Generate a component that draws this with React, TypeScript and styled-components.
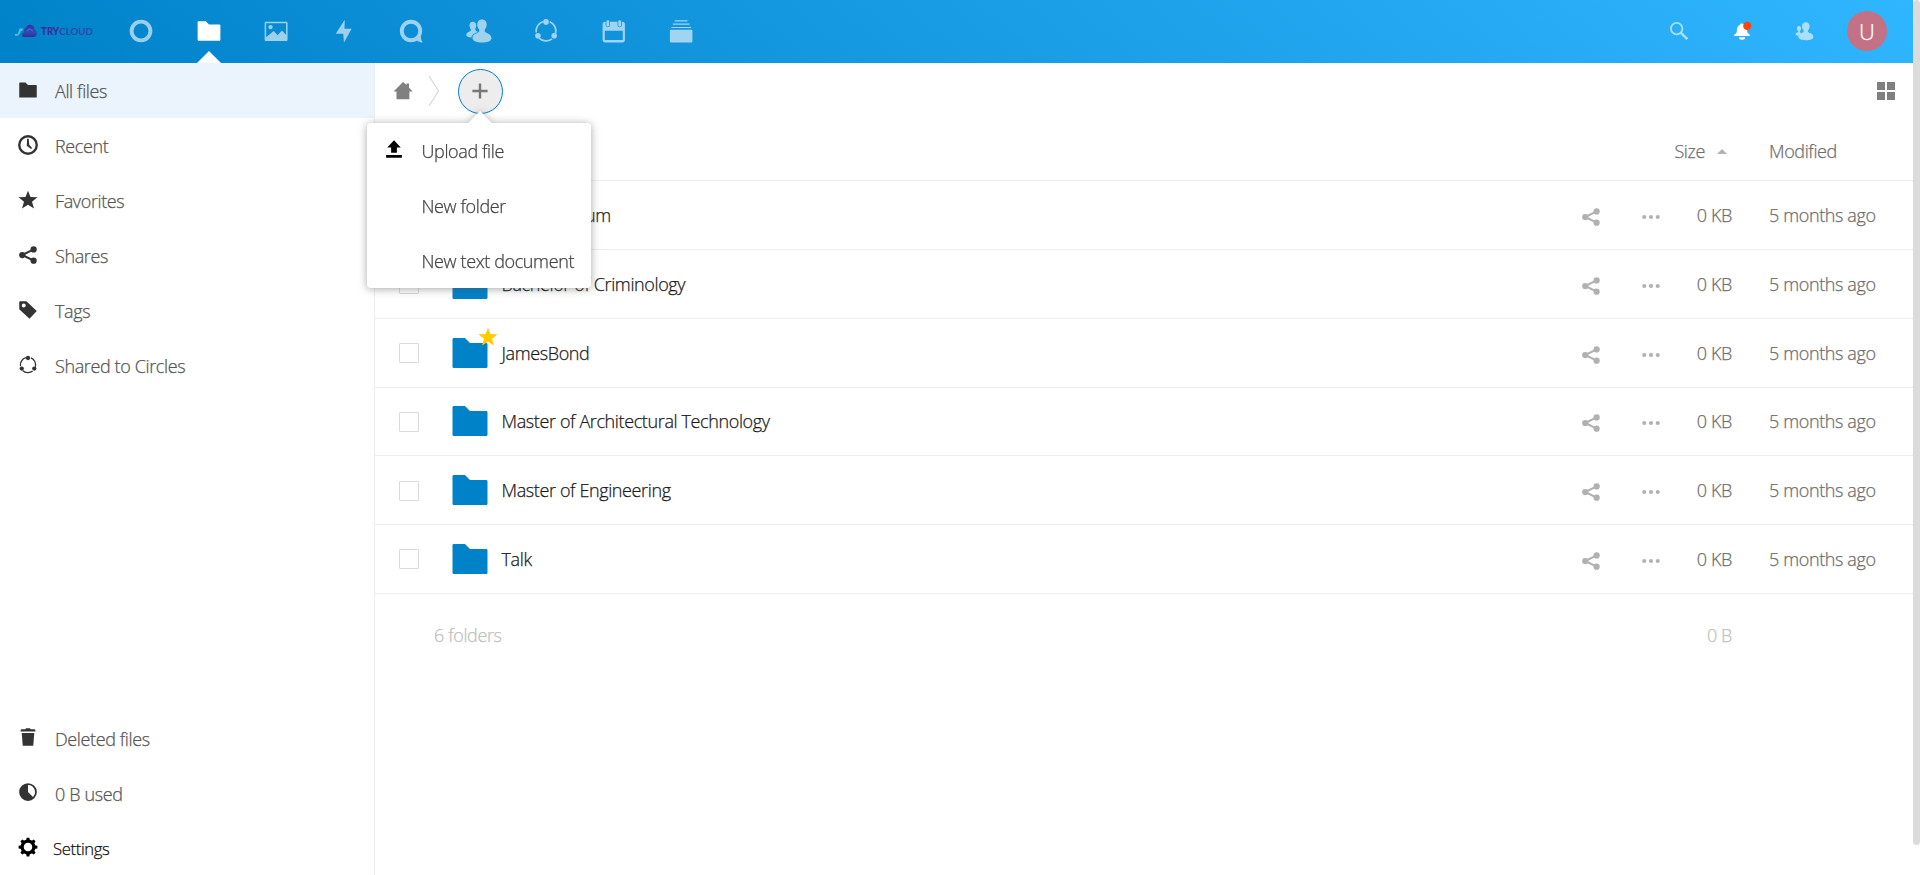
import React from "react";
import styled, { createGlobalStyle, css } from "styled-components";

const GlobalStyle = createGlobalStyle`
  *, *::before, *::after { box-sizing: border-box; }
  html, body { margin: 0; padding: 0; }
  body {
    background: #fff;
    color: #222;
    font-family: "Open Sans", "Noto Sans", sans-serif;
    font-size: 18px;
    font-weight: 300;
    letter-spacing: -0.38px;
    -webkit-text-stroke-width: 0.25px;
    overflow: hidden;
  }
  svg { display: block; flex: none; }
`;

/* ---------- layout ---------- */

const Page = styled.div`
  display: flex;
  height: 875px;
`;

const Shell = styled.div`
  flex: 1;
  min-width: 0;
  display: flex;
  flex-direction: column;
`;

const ScrollTrack = styled.div`
  width: 7px;
`;

const ScrollThumb = styled.div`
  height: 845px;
  border-radius: 4px;
  background: #dbdbdb;
`;

const Header = styled.header`
  height: 62.5px;
  flex: none;
  display: flex;
  align-items: stretch;
  padding-right: 15px;
  background: linear-gradient(40deg, #0082c9 0%, #30b6ff 100%);
`;

const LogoBox = styled.div`
  width: 107.7px;
  padding: 22px 0 0 14px;
`;

const AppNav = styled.nav`
  flex: 1;
  display: flex;
`;

const AppLink = styled.a<{ $active?: boolean }>`
  width: 67.5px;
  display: flex;
  align-items: center;
  justify-content: center;
  color: #fff;
  position: relative;
  svg { opacity: ${(p) => (p.$active ? 1 : 0.6)}; }
  ${(p) =>
    p.$active &&
    css`
      &::after {
        content: "";
        position: absolute;
        bottom: 0;
        left: 50%;
        margin-left: -12px;
        border: 12px solid transparent;
        border-top-width: 0;
        border-bottom-color: #fff;
      }
    `}
`;

const HeaderTools = styled.div`
  display: flex;
`;

const Tool = styled.a<{ $dim?: boolean }>`
  width: 62.5px;
  display: flex;
  align-items: center;
  justify-content: center;
  color: #fff;
  svg { opacity: ${(p) => (p.$dim ? 0.6 : 1)}; }
`;

const Avatar = styled.div`
  width: 40px;
  height: 40px;
  border-radius: 50%;
  background: #c37285;
  color: #fff;
  font-size: 22px;
  line-height: 40px;
  text-align: center;
`;

const Body = styled.div`
  flex: 1;
  display: flex;
  min-height: 0;
`;

const Sidebar = styled.aside`
  width: 375px;
  flex: none;
  border-right: 1px solid #ededed;
  display: flex;
  flex-direction: column;
  justify-content: space-between;
`;

const NavList = styled.ul`
  list-style: none;
  margin: 0;
  padding: 0;
`;

const NavItem = styled.li<{ $active?: boolean; $strong?: boolean }>`
  height: 55px;
  display: flex;
  align-items: center;
  padding: 2px 0 0 18px;
  gap: ${(p) => (p.$strong ? 15 : 17)}px;
  color: ${(p) => (p.$strong ? "#111" : "#555")};
  font-size: ${(p) => (p.$strong ? 16.7 : 18)}px;
  background: ${(p) => (p.$active ? "#ebf3fc" : "transparent")};
  svg {
    color: ${(p) => (p.$strong ? "#000" : "#333")};
    margin-top: -3px;
  }
`;

const Main = styled.main`
  flex: 1;
  min-width: 0;
`;

const Controls = styled.div`
  height: 62.5px;
  display: flex;
  align-items: center;
  justify-content: space-between;
  padding: 0 18px 5px 18px;
  color: #808080;
`;

const Crumbs = styled.div`
  display: flex;
  align-items: center;
`;

const CrumbSeparator = styled.svg`
  margin: 0 18px 0 14.5px;
`;

const NewButtonWrap = styled.div`
  position: relative;
`;

const NewButton = styled.button`
  width: 45px;
  height: 45px;
  padding: 0;
  display: flex;
  align-items: center;
  justify-content: center;
  border: 1px solid #0082c9;
  border-radius: 50%;
  background: #ededed;
  color: #777;
`;

const Menu = styled.ul`
  position: absolute;
  z-index: 2;
  top: 54px;
  left: -91px;
  width: 224px;
  margin: 0;
  padding: 0;
  list-style: none;
  background: #fff;
  border-radius: 4px;
  filter: drop-shadow(0 1px 4px rgba(77, 77, 77, 0.5));
  &::after {
    content: "";
    position: absolute;
    bottom: 100%;
    left: 101px;
    border: 12px solid transparent;
    border-top-width: 0;
    border-bottom-color: #fff;
  }
`;

const MenuItem = styled.li`
  height: 55px;
  display: flex;
  align-items: center;
  gap: 18px;
  padding: 2px 0 0 17px;
  color: #444;
  white-space: nowrap;
`;

const MenuIcon = styled.span`
  width: 20px;
  color: #000;
  padding-bottom: 4px;
`;

const rowGrid = css`
  display: grid;
  grid-template-columns: 74.5px 52px 1fr 60px 60px 51px 181px;
  align-items: center;
`;

const TableHead = styled.div`
  ${rowGrid}
  height: 56.25px;
  padding-bottom: 3px;
  border-bottom: 1px solid #ededed;
  color: #6e6e6e;
`;

const Row = styled.div`
  ${rowGrid}
  height: 68.75px;
  border-bottom: 1px solid #ededed;
`;

const Summary = styled.div`
  ${rowGrid}
  height: 82px;
  color: #c0c0c0;
`;

const Checkbox = styled.span`
  width: 20px;
  height: 20px;
  margin-left: 24px;
  margin-top: 1px;
  border: 1px solid #dbdbdb;
  border-radius: 1px;
`;

const Thumb = styled.span`
  position: relative;
  color: #0082c9;
`;

const StarBadge = styled.span`
  position: absolute;
  top: -5.5px;
  left: 28.5px;
  color: #fc0;
`;

const Name = styled.span`
  white-space: nowrap;
  color: #1a1a1a;
`;

const Action = styled.span`
  display: flex;
  justify-content: center;
  padding-top: 4px;
  color: #b1b1b1;
`;

const Size = styled.span`
  text-align: right;
  white-space: nowrap;
`;

const SizeHead = styled.span`
  grid-column: 5 / 7;
  display: flex;
  align-items: center;
  justify-content: flex-end;
  gap: 12px;
  padding-right: 5px;
`;

const Modified = styled.span`
  padding-left: 37px;
  white-space: nowrap;
`;

const RowSize = styled(Size)`
  color: #6e6e6e;
`;

const RowModified = styled(Modified)`
  color: #6e6e6e;
`;

const Count = styled.span`
  grid-column: 1 / 4;
  padding-left: 59px;
`;

const TotalSize = styled(Size)`
  grid-column: 6;
`;

/* ---------- icons ---------- */

type IconProps = { size?: number };

const Icon = ({ size = 20, box = 16, children }: IconProps & { box?: number; children: React.ReactNode }) => (
  <svg width={size} height={size} viewBox={`0 0 ${box} ${box}`} fill="currentColor">
    {children}
  </svg>
);

const FolderIcon = ({ size }: IconProps) => (
  <Icon size={size}>
    <path d="M1.5 2c-.25 0-.5.25-.5.5v11c0 .26.24.5.5.5h13c.26 0 .5-.24.5-.5v-9c0-.25-.25-.5-.5-.5H8L6 2z" />
  </Icon>
);

const ShareIcon = () => (
  <Icon>
    <circle cx="3.4" cy="8" r="2.5" />
    <circle cx="12.5" cy="3.5" r="2.5" />
    <circle cx="12.5" cy="12.5" r="2.5" />
    <path d="M12.5 3.5 3.4 8l9.1 4.5" fill="none" stroke="currentColor" strokeWidth="1.7" />
  </Icon>
);

const StarIcon = () => (
  <Icon>
    <path d="m8 .5 2 5 5.600.3-4.400 3.500 1.600 5.500L8 11.700l-4.800 3.100 1.600-5.500L.4 5.800 6 5.500z" />
  </Icon>
);

const ClockIcon = () => (
  <Icon>
    <circle cx="8" cy="8" r="7" fill="none" stroke="currentColor" strokeWidth="1.9" />
    <path d="M7.3 3h1.3l.4 4.7 2.3 2.6-.9.9L7 8.6z" />
  </Icon>
);

const TagIcon = () => (
  <Icon>
    <path
      fillRule="evenodd"
      d="M1.5 1h5.2L15 8.8 9.2 15 1 7.3V1.5zM4.6 2.8a1.6 1.6 0 1 0 0 3.2 1.6 1.6 0 0 0 0-3.2z"
    />
  </Icon>
);

const TrashIcon = () => (
  <Icon>
    <path d="M6.4 1h3.2l.5.8H13c.6 0 .9.4 1 1.7H2c.1-1.3.4-1.7 1-1.7h2.900zM3 4.800h10L12.200 15H3.800z" />
  </Icon>
);

const QuotaIcon = () => (
  <Icon>
    <path fillRule="evenodd" d="M8 .9a7.100 7.100 0 1 0 0 14.200A7.100 7.100 0 0 0 8 .9zm0 1.500a5.600 5.600 0 0 1 4 9.500L8 8z" />
  </Icon>
);

const GearIcon = () => (
  <Icon>
    <circle cx="8" cy="8" r="4.700" fill="none" stroke="currentColor" strokeWidth="2.600" />
    {[0, 45, 90, 135].map((a) => (
      <path key={a} transform={`rotate(${a} 8 8)`} d="M6.500 3 6.900.5h2.200l.4 2.500zM6.500 13l.4 2.500h2.200l.4-2.500z" />
    ))}
  </Icon>
);

const arc = (from: number, to: number, c: number, r: number) => {
  const p = (a: number) =>
    `${(c + r * Math.cos((a * Math.PI) / 180)).toFixed(2)} ${(c + r * Math.sin((a * Math.PI) / 180)).toFixed(2)}`;
  return `M${p(from)}A${r} ${r} 0 0 1 ${p(to)}`;
};

const CirclesIcon = ({ size }: IconProps) => (
  <Icon size={size} box={26}>
    <g fill="none" stroke="currentColor" strokeWidth="1.7">
      {[-90, 30, 150].map((a) => (
        <path key={a} d={arc(a + 22, a + 104, 13, 9.9)} />
      ))}
    </g>
    <circle cx="13" cy="3.900" r="2.800" />
    <circle cx="4.900" cy="17.700" r="2.800" />
    <circle cx="21.200" cy="17.700" r="2.800" />
  </Icon>
);

const HomeIcon = () => (
  <Icon>
    <path d="M8 .8 .4 8.300h2.400v6.300h10.300V8.300h2.600l-2.900-2.900V1.900h-2v1.300z" />
  </Icon>
);

const GridIcon = () => (
  <Icon size={18} box={18}>
    <path d="M0 0h8v8H0zM10 0h8v8h-8zM0 10h8v8H0zM10 10h8v8h-8z" />
  </Icon>
);

const UploadIcon = () => (
  <Icon>
    <path d="M8 1 2.600 6.800h3.100v4.200h4.600V6.800h3.100zM1.700 12.800h12.600V15H1.700z" />
  </Icon>
);

const DotsIcon = () => (
  <Icon>
    <circle cx="2.600" cy="8" r="1.650" />
    <circle cx="8" cy="8" r="1.650" />
    <circle cx="13.400" cy="8" r="1.650" />
  </Icon>
);

const RingIcon = () => (
  <Icon size={26} box={26}>
    <circle cx="13" cy="13" r="9.400" fill="none" stroke="currentColor" strokeWidth="3.900" />
  </Icon>
);

const PictureIcon = () => (
  <Icon size={26} box={26}>
    <rect x="2.400" y="4.400" width="21.400" height="17.900" rx=".4" fill="none" stroke="currentColor" strokeWidth="1.500" />
    <circle cx="7.500" cy="9.100" r="2.200" />
    <path d="M3 21v-1.800l7.700-6.200 3.900 4.300 4.400-4.900 4.600 5V22H3z" />
  </Icon>
);

const BoltIcon = () => (
  <Icon size={26} box={26}>
    <path d="M13.700 1.700 4.800 15.700h7.400l.8 8.700 7.600-13.700h-7.100z" />
  </Icon>
);

const TalkIcon = () => (
  <Icon size={26} box={26}>
    <circle cx="13" cy="13" r="9.200" fill="none" stroke="currentColor" strokeWidth="3.900" />
    <path d="M18.500 22.300c2 1.600 4.200 2.200 5.600 2.100.6-.1.600-.6.2-1-1.100-1.200-1.500-3-1.300-5.400z" />
  </Icon>
);

const PeopleIcon = () => (
  <Icon size={26} box={26}>
    <path d="M6.700 3.800c-1.900 0-3.200 1.400-3.200 3.500 0 1.600.5 2.700 1.200 3.700.3 1 .1 1.800-.3 2.100C2.600 14.200.3 14.500.3 17.200c0 1.200 2 2.100 5 2.200.5-2.100 2.700-4.400 6.700-5.400-.8-.7-2.800-.9-2.900-3 .8-1 1.100-2.200 1.100-3.700 0-2.100-1.500-3.500-3.500-3.500z" />
    <path d="M15.900 1.400c-2.700 0-4.700 2-4.700 4.900 0 2.200.8 3.700 1.800 5 .5 1.400.2 2.600-.5 3-2.500 1.300-6 2.300-6 5.800 0 3 4 4.500 9.400 4.500s9.500-1.300 9.500-4.300c0-4.100-4.600-4.800-6.200-6.200-.6-.6-.6-1.800-.2-2.800 1-1.300 1.700-2.800 1.700-5 0-2.900-2.100-4.900-4.800-4.900z" />
  </Icon>
);

const ContactsMenuIcon = () => (
  <Icon size={20} box={20}>
    <ellipse cx="5" cy="7.400" rx="2.100" ry="2.600" />
    <path d="M4.200 9h1.700v2.300l1.700.9c-1.500.7-2.500 1.500-3 2.500-1.700-.1-3-.6-3-1.300 0-1.600 2-1.700 2.600-2.300z" />
    <path d="M11.800 1.300c-2.200 0-3.800 1.600-3.800 3.900 0 1.700.7 2.900 1.400 3.900.4 1.100.2 2-.4 2.400-2 1-4.600 1.600-4.600 4.300 0 2.300 3 3.400 7.400 3.400s7.600-1 7.600-3.300c0-3.200-3.600-3.500-5-4.600-.5-.5-.5-1.400-.2-2.200.8-1 1.400-2.200 1.400-3.900 0-2.300-1.600-3.900-3.800-3.900z" />
  </Icon>
);

const CalendarIcon = () => (
  <Icon size={26} box={26}>
    <path
      fillRule="evenodd"
      d="M4 3.700h.6v3.400a2.200 2.200 0 0 0 4.400 0V3.700h7.500v3.400a2.200 2.200 0 0 0 4.400 0V3.700h.6c1.400 0 2.400 1 2.400 2.400v15.900c0 1.400-1 2.400-2.400 2.400H4c-1.400 0-2.400-1-2.400-2.400V6.100c0-1.400 1-2.400 2.400-2.400zm-.2 9V22h18v-9.300z"
    />
    <rect x="5.400" y="2.300" width="2.800" height="6.400" rx="1.400" />
    <rect x="17.300" y="2.300" width="2.800" height="6.400" rx="1.400" />
  </Icon>
);

const DeckIcon = () => (
  <Icon size={26} box={26}>
    <rect x="1.900" y="11.700" width="22.500" height="12.700" rx="1" />
    <path d="M3.300 8.900h19.800v1.200H3.300zM4.800 5.600h16.700v1.200H4.800zM6.700 2.200h12.800v1.200H6.700z" />
  </Icon>
);

const SearchIcon = () => (
  <Icon>
    <circle cx="6.100" cy="6.100" r="4.600" fill="none" stroke="currentColor" strokeWidth="1.500" />
    <path d="m9.500 9.500 5.200 5" stroke="currentColor" strokeWidth="2.100" />
  </Icon>
);

const BellIcon = () => (
  <Icon>
    <path d="M7.500 2c-.7 0-1.300.5-1.300 1.200C4.300 4 3.900 5.700 3.900 7.500c0 1.900-.6 2.400-2.300 3.600V12h12.800v-.9c-1.700-1.200-2.300-1.700-2.300-3.600 0-3-1-5.500-4.600-5.500zM5.500 13a2.500 2 0 0 0 5 0z" />
    <circle cx="12.200" cy="3.900" r="3.300" fill="#f8460f" />
  </Icon>
);

const LogoText = styled.text`
  font-family: Lato, sans-serif;
  font-size: 10.3px;
  letter-spacing: 0;
  -webkit-text-stroke-width: 0;
`;

const CloudLogo = () => (
  <svg width="86" height="20" viewBox="0 0 86 20">
    <defs>
      <linearGradient id="cloud" x1="0" y1="0" x2="0" y2="1">
        <stop offset="0" stopColor="#45289a" />
        <stop offset=".6" stopColor="#2b4cb4" />
        <stop offset="1" stopColor="#3a2b96" />
      </linearGradient>
    </defs>
    <path d="M5.500 6.500h4L8 9H7L5.800 12H5l-.8 1.700H1V12h2.600l1-2z" fill="#4fc0dc" />
    <path
      d="M10.500 15C7.300 15 7 11 10 10.200c-.6-2.200.4-4 2-4.500 1.500-3.400 6.200-3.900 7.800-.6.600 1.200.5 2.400.5 2.400s2.700 1 2.600 3.900c-.1 2.300-1.700 3.600-3.600 3.600z"
      fill="url(#cloud)"
    />
    <path d="m12.600 9 3.300-2.300L19 9.300" fill="none" stroke="#2f74cc" strokeWidth="1.300" />
    <LogoText x="27" y="12.700" fill="#3c2c96" textLength="52" lengthAdjust="spacingAndGlyphs">
      <tspan fontWeight="900">TRY</tspan>
      <tspan fontWeight="700" fill="#3345a8">CLOUD</tspan>
    </LogoText>
  </svg>
);

/* ---------- data ---------- */

const apps = [
  { id: "dashboard", icon: <RingIcon /> },
  { id: "files", icon: <FolderIcon size={26} />, active: true },
  { id: "photos", icon: <PictureIcon /> },
  { id: "activity", icon: <BoltIcon /> },
  { id: "talk", icon: <TalkIcon /> },
  { id: "contacts", icon: <PeopleIcon /> },
  { id: "circles", icon: <CirclesIcon size={26} /> },
  { id: "calendar", icon: <CalendarIcon /> },
  { id: "deck", icon: <DeckIcon /> },
];

const views = [
  { label: "All files", icon: <FolderIcon />, active: true },
  { label: "Recent", icon: <ClockIcon /> },
  { label: "Favorites", icon: <StarIcon /> },
  { label: "Shares", icon: <ShareIcon /> },
  { label: "Tags", icon: <TagIcon /> },
  { label: "Shared to Circles", icon: <CirclesIcon /> },
];

const files = [
  { name: "Artisan Forum" },
  { name: "Bachelor of Criminology" },
  { name: "JamesBond", favorite: true },
  { name: "Master of Architectural Technology" },
  { name: "Master of Engineering" },
  { name: "Talk" },
];

export default function App() {
  return (
    <Page>
      <GlobalStyle />
      <Shell>
        <Header>
          <LogoBox>
            <CloudLogo />
          </LogoBox>
          <AppNav>
            {apps.map((a) => (
              <AppLink key={a.id} $active={a.active}>
                {a.icon}
              </AppLink>
            ))}
          </AppNav>
          <HeaderTools>
            <Tool $dim>
              <SearchIcon />
            </Tool>
            <Tool>
              <BellIcon />
            </Tool>
            <Tool $dim>
              <ContactsMenuIcon />
            </Tool>
            <Tool>
              <Avatar>U</Avatar>
            </Tool>
          </HeaderTools>
        </Header>
        <Body>
          <Sidebar>
            <NavList>
              {views.map((v) => (
                <NavItem key={v.label} $active={v.active}>
                  {v.icon}
                  {v.label}
                </NavItem>
              ))}
            </NavList>
            <NavList>
              <NavItem>
                <TrashIcon />
                Deleted files
              </NavItem>
              <NavItem>
                <QuotaIcon />0 B used
              </NavItem>
              <NavItem $strong>
                <GearIcon />
                Settings
              </NavItem>
            </NavList>
          </Sidebar>
          <Main>
            <Controls>
              <Crumbs>
                <HomeIcon />
                <CrumbSeparator width="12" height="32" viewBox="0 0 12 32" fill="none" stroke="#d5d5d5" strokeWidth="1.100">
                  <path d="m1 1 9.500 15L1 31" />
                </CrumbSeparator>
                <NewButtonWrap>
                  <NewButton aria-label="New">
                    <svg width="16" height="16" viewBox="0 0 16 16" stroke="currentColor" strokeWidth="2.400">
                      <path d="M8 .4v15.200M.4 8h15.200" />
                    </svg>
                  </NewButton>
                  <Menu>
                    <MenuItem>
                      <MenuIcon>
                        <UploadIcon />
                      </MenuIcon>
                      Upload file
                    </MenuItem>
                    <MenuItem>
                      <MenuIcon />
                      New folder
                    </MenuItem>
                    <MenuItem>
                      <MenuIcon />
                      New text document
                    </MenuItem>
                  </Menu>
                </NewButtonWrap>
              </Crumbs>
              <GridIcon />
            </Controls>
            <TableHead>
              <SizeHead>
                Size
                <svg width="10" height="5" viewBox="0 0 10 5" fill="#b1b1b1">
                  <path d="M0 5 5 0l5 5z" />
                </svg>
              </SizeHead>
              <Modified>Modified</Modified>
            </TableHead>
            {files.map((f) => (
              <Row key={f.name}>
                <Checkbox />
                <Thumb>
                  <FolderIcon size={40} />
                  {f.favorite && (
                    <StarBadge>
                      <StarIcon />
                    </StarBadge>
                  )}
                </Thumb>
                <Name>{f.name}</Name>
                <Action>
                  <ShareIcon />
                </Action>
                <Action>
                  <DotsIcon />
                </Action>
                <RowSize>0 KB</RowSize>
                <RowModified>5 months ago</RowModified>
              </Row>
            ))}
            <Summary>
              <Count>6 folders</Count>
              <TotalSize>0 B</TotalSize>
            </Summary>
          </Main>
        </Body>
      </Shell>
      <ScrollTrack>
        <ScrollThumb />
      </ScrollTrack>
    </Page>
  );
}
